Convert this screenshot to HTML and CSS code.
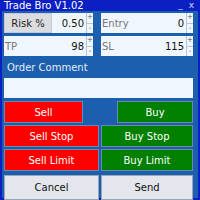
FILE: index.html
```html
<!DOCTYPE html>
<html>
<head>
<meta charset="utf-8">
<link rel="stylesheet" href="styles.css">
</head>
<body>
<div class="win">
  <div class="title">
    <span class="title-text">Trade Bro V1.02</span>
    <span class="title-ctrls"><span class="min">_</span><span class="close">x</span></span>
  </div>
  <div class="body">
    <div class="grid2">
      <div class="group">
        <div class="lbtn">Risk %</div>
        <div class="edit num short">0.50</div>
        <div class="spin"><span>+</span><span>-</span></div>
      </div>
      <div class="group">
        <div class="edit wide"><span class="lbl">Entry</span><span class="val">0</span></div>
        <div class="spin"><span>+</span><span>-</span></div>
      </div>
      <div class="group">
        <div class="edit wide"><span class="lbl">TP</span><span class="val">98</span></div>
        <div class="spin"><span>+</span><span>-</span></div>
      </div>
      <div class="group">
        <div class="edit wide"><span class="lbl">SL</span><span class="val">115</span></div>
        <div class="spin"><span>+</span><span>-</span></div>
      </div>
    </div>
    <div class="comment-label">Order Comment</div>
    <div class="comment"></div>
    <div class="row first">
      <div class="btn red sell">Sell</div>
      <div class="btn green buy">Buy</div>
    </div>
    <div class="row">
      <div class="btn red">Sell Stop</div>
      <div class="btn green">Buy Stop</div>
    </div>
    <div class="row">
      <div class="btn red">Sell Limit</div>
      <div class="btn green">Buy Limit</div>
    </div>
    <div class="row last">
      <div class="btn gray">Cancel</div>
      <div class="btn gray">Send</div>
    </div>
  </div>
</div>
</body>
</html>
```
FILE: styles.css
```css
html, body {
  margin: 0;
  padding: 0;
  width: 200px;
  height: 200px;
  overflow: hidden;
  font-family: "DejaVu Sans", Verdana, sans-serif;
  font-size: 10px;
}
.win {
  width: 200px;
  height: 200px;
  box-sizing: border-box;
  background: #1c5fae;
  border: 2px solid #0b1fc4;
  border-top: none;
  display: flex;
  flex-direction: column;
}
.title {
  height: 11px;
  background: #0b1fc4;
  color: #fff;
  display: flex;
  align-items: center;
  justify-content: space-between;
  padding: 0 4px 0 2px;
  font-size: 10px;
  line-height: 11px;
}
.title-ctrls {
  display: flex;
  gap: 6px;
  font-size: 9px;
  color: #cfd6f4;
}
.body {
  padding: 2px 5px 0 2px;
  display: flex;
  flex-direction: column;
}
.grid2 {
  display: grid;
  grid-template-columns: 89px 92px;
  column-gap: 8px;
  row-gap: 3px;
  background: #1c5fae;
}
.group {
  display: flex;
  height: 20px;
}
.lbtn {
  width: 48px;
  background: #dadcdf;
  border: 1px solid #c8ccd2;
  box-sizing: border-box;
  display: flex;
  align-items: center;
  justify-content: center;
  color: #222;
}
.edit {
  background: #eff6fd;
  box-sizing: border-box;
  display: flex;
  align-items: center;
  justify-content: space-between;
  padding: 0 2px 0 1px;
  color: #111;
}
.edit.short { width: 34px; justify-content: flex-end; }
.edit.wide { flex: 1; }
.lbl { color: #777; }
.val { color: #111; }
.spin {
  width: 7px;
  display: flex;
  flex-direction: column;
  background: #eff6fd;
  border-left: 1px solid #b8c4d0;
  box-sizing: border-box;
}
.spin span {
  flex: 1;
  font-size: 7px;
  line-height: 9px;
  text-align: center;
  color: #555;
}
.spin span + span { border-top: 1px solid #b8c4d0; }
.comment-label {
  margin-top: 5px;
  height: 14px;
  line-height: 14px;
  color: #e4ecf6;
  padding-left: 3px;
}
.comment {
  margin-top: 3px;
  height: 20px;
  background: #eff6fd;
}
.row {
  display: grid;
  grid-template-columns: 95px 92px;
  column-gap: 2px;
  margin-top: 2px;
}
.row.first { margin-top: 3px; grid-template-columns: 79px 76px; column-gap: 34px; }
.row.last { margin-top: 4px; }
.btn {
  height: 22px;
  box-sizing: border-box;
  display: flex;
  align-items: center;
  justify-content: center;
  color: #fff;
  border: 1px solid #6a8ab0;
}
.red { background: #ff0000; }
.green { background: #007f00; }
.gray { background: #e3e6ec; color: #111; border-color: #9aa6b6; height: 25px; }
```
